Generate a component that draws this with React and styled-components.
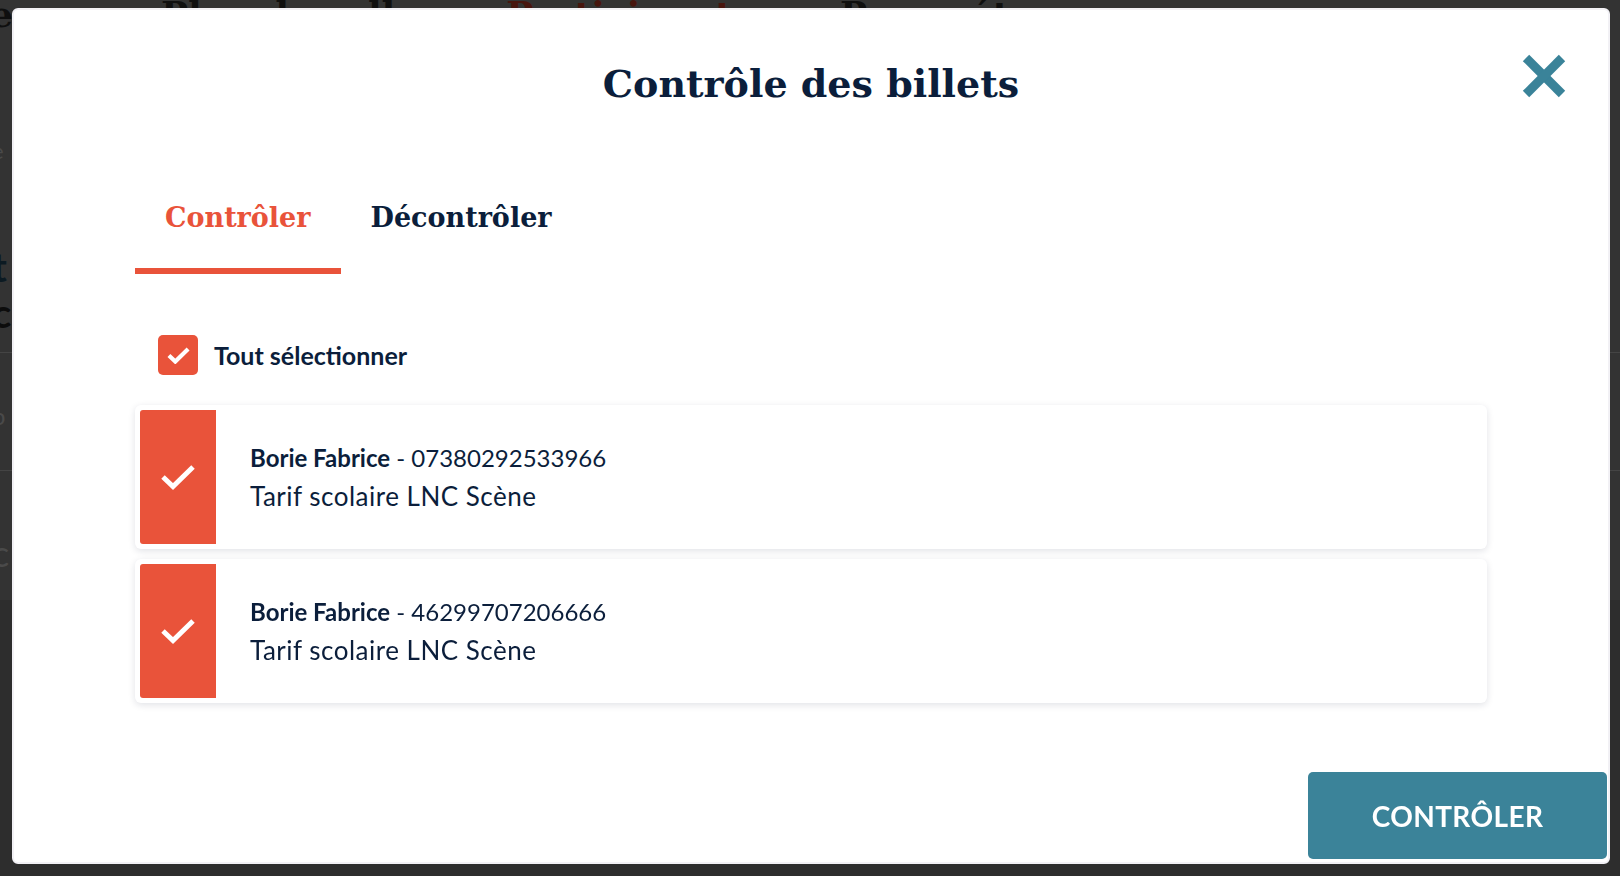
import React from 'react';
import styled, { createGlobalStyle } from 'styled-components';

const GlobalStyle = createGlobalStyle`
  html, body {
    margin: 0;
    padding: 0;
    width: 100%;
    height: 100%;
    overflow: hidden;
    background: #333333;
  }
  body {
    font-family: Lato, "Liberation Sans", sans-serif;
  }
  #root {
    height: 100%;
  }
  * {
    box-sizing: border-box;
  }
`;

// page lying under the dark overlay, only its edges stay visible
const Page = styled.div`
  height: 100%;
  background: #333333;
  overflow: hidden;
`;

const PageNav = styled.div`
  display: flex;
  gap: 88px;
  margin-top: -6px;
  margin-left: -10px;
  font-family: "DejaVu Serif", serif;
  font-weight: 700;
  font-size: 36px;
  line-height: 40px;
  color: #0f0f0f;
`;

const NavItem = styled.span`
  color: ${p => (p.active ? '#47150e' : '#0f0f0f')};
  margin-right: ${p => (p.first ? '60px' : '0')};
`;

const GhostList = styled.div`
  margin-top: 86px;
`;

const GhostRow = styled.div`
  height: ${p => p.h}px;
  padding-top: ${p => p.pt}px;
  margin-left: -8px;
  font-size: ${p => p.size || 22}px;
  font-weight: ${p => (p.bold ? 700 : 400)};
  line-height: 1;
  color: ${p => p.color || '#4a4a4a'};
  border-bottom: ${p => (p.line ? '1px solid #444444' : 'none')};
  background: ${p => p.bg || 'transparent'};
`;

const Overlay = styled.div`
  position: fixed;
  inset: 0;
  display: flex;
  padding: 8px 10px 12px 12px;
`;

const Dialog = styled.div`
  position: relative;
  flex: 1;
  display: flex;
  flex-direction: column;
  background: #ffffff;
  border: 2px solid #f2f1f5;
  border-radius: 6px;
`;

const Title = styled.h1`
  margin: 52px 0 0;
  text-align: center;
  font-family: "DejaVu Serif", serif;
  font-weight: 700;
  font-size: 38px;
  line-height: 44px;
  color: #0b1e3b;
`;

const CloseBtn = styled.button`
  position: absolute;
  top: 44px;
  right: 42px;
  width: 44px;
  height: 44px;
  padding: 0;
  border: none;
  background: transparent;
  cursor: pointer;
  svg {
    display: block;
  }
`;

const Body = styled.div`
  padding: 0 121px;
`;

const Tabs = styled.div`
  display: flex;
  margin-top: 96px;
`;

const Tab = styled.button`
  padding: 0 30px 34px;
  border: none;
  border-bottom: 6px solid ${p => (p.active ? '#e9533a' : 'transparent')};
  background: transparent;
  font-family: "DejaVu Serif", serif;
  font-weight: 700;
  font-size: 27px;
  line-height: 32px;
  color: ${p => (p.active ? '#e9533a' : '#0b1e3b')};
  cursor: pointer;
`;

const SelectAll = styled.label`
  display: flex;
  align-items: center;
  gap: 16px;
  margin: 61px 0 0 23px;
  font-weight: 700;
  font-size: 25px;
  color: #0b1e3b;
`;

const Checkbox = styled.span`
  display: flex;
  align-items: center;
  justify-content: center;
  width: 40px;
  height: 40px;
  border-radius: 5px;
  background: #e9533a;
`;

const TicketList = styled.div`
  display: flex;
  flex-direction: column;
  gap: 10px;
  margin-top: 30px;
`;

const Ticket = styled.div`
  display: flex;
  height: 144px;
  padding: 5px;
  background: #ffffff;
  border-radius: 6px;
  box-shadow: 0 2px 7px rgba(20, 30, 60, 0.13);
`;

const TicketCheck = styled.div`
  display: flex;
  align-items: center;
  justify-content: center;
  width: 76px;
  flex-shrink: 0;
  background: #e9533a;
  border-radius: 3px 0 0 3px;
`;

const TicketInfo = styled.div`
  display: flex;
  flex-direction: column;
  justify-content: center;
  padding-left: 34px;
  color: #0b1e3b;
`;

const TicketLine = styled.div`
  font-size: ${p => p.size}px;
  letter-spacing: ${p => p.spacing || 0}px;
  line-height: 38px;
  b {
    font-weight: 700;
  }
`;

const Footer = styled.div`
  display: flex;
  justify-content: flex-end;
  margin-top: auto;
  padding: 0 1px 3px 0;
`;

const SubmitBtn = styled.button`
  width: 299px;
  height: 87px;
  border: none;
  border-radius: 5px;
  background: #3b8399;
  color: #ffffff;
  font-family: Lato, "Liberation Sans", sans-serif;
  font-weight: 700;
  font-size: 28px;
  letter-spacing: 0.4px;
  cursor: pointer;
`;

const CheckIcon = ({ w, h, sw }) => (
  <svg width={w} height={h} viewBox="0 0 36 26" fill="none">
    <polyline points="3,13 13,22.5 33,3" stroke="#ffffff" strokeWidth={sw} />
  </svg>
);

const tickets = [
  { name: 'Borie Fabrice', code: '07380292533966', rate: 'Tarif scolaire LNC Scène' },
  { name: 'Borie Fabrice', code: '46299707206666', rate: 'Tarif scolaire LNC Scène' },
];

export default function App() {
  return (
    <>
      <GlobalStyle />
      <Page>
        <PageNav>
          <NavItem first>e</NavItem>
          <NavItem>Plan de salle</NavItem>
          <NavItem active>Participants</NavItem>
          <NavItem>Paramétrage</NavItem>
        </PageNav>
        <GhostList>
          <GhostRow h={110} pt={20}>e</GhostRow>
          <GhostRow h={60} pt={17} size={40} bold color="#0c1a22">t</GhostRow>
          <GhostRow h={63} pt={3} size={40} bold color="#0c0c0c" line>c</GhostRow>
          <GhostRow h={118} pt={51} size={24} line>p</GhostRow>
          <GhostRow h={129} pt={64} size={36}>c</GhostRow>
          <GhostRow h={400} pt={0} bg="#2d2d2d" />
        </GhostList>
      </Page>

      <Overlay>
        <Dialog>
          <Title>Contrôle des billets</Title>
          <CloseBtn aria-label="Fermer">
            <svg width="44" height="44" viewBox="0 0 44 44">
              <line x1="4" y1="4" x2="40" y2="40" stroke="#3a8399" strokeWidth="9" />
              <line x1="40" y1="4" x2="4" y2="40" stroke="#3a8399" strokeWidth="9" />
            </svg>
          </CloseBtn>

          <Body>
            <Tabs>
              <Tab active>Contrôler</Tab>
              <Tab>Décontrôler</Tab>
            </Tabs>

            <SelectAll>
              <Checkbox>
                <CheckIcon w={23} h={17} sw={6.5} />
              </Checkbox>
              Tout sélectionner
            </SelectAll>

            <TicketList>
              {tickets.map(t => (
                <Ticket key={t.code}>
                  <TicketCheck>
                    <CheckIcon w={36} h={26} sw={5} />
                  </TicketCheck>
                  <TicketInfo>
                    <TicketLine size={24}>
                      <b>{t.name}</b> - {t.code}
                    </TicketLine>
                    <TicketLine size={26} spacing={0.5}>{t.rate}</TicketLine>
                  </TicketInfo>
                </Ticket>
              ))}
            </TicketList>
          </Body>

          <Footer>
            <SubmitBtn>CONTRÔLER</SubmitBtn>
          </Footer>
        </Dialog>
      </Overlay>
    </>
  );
}
